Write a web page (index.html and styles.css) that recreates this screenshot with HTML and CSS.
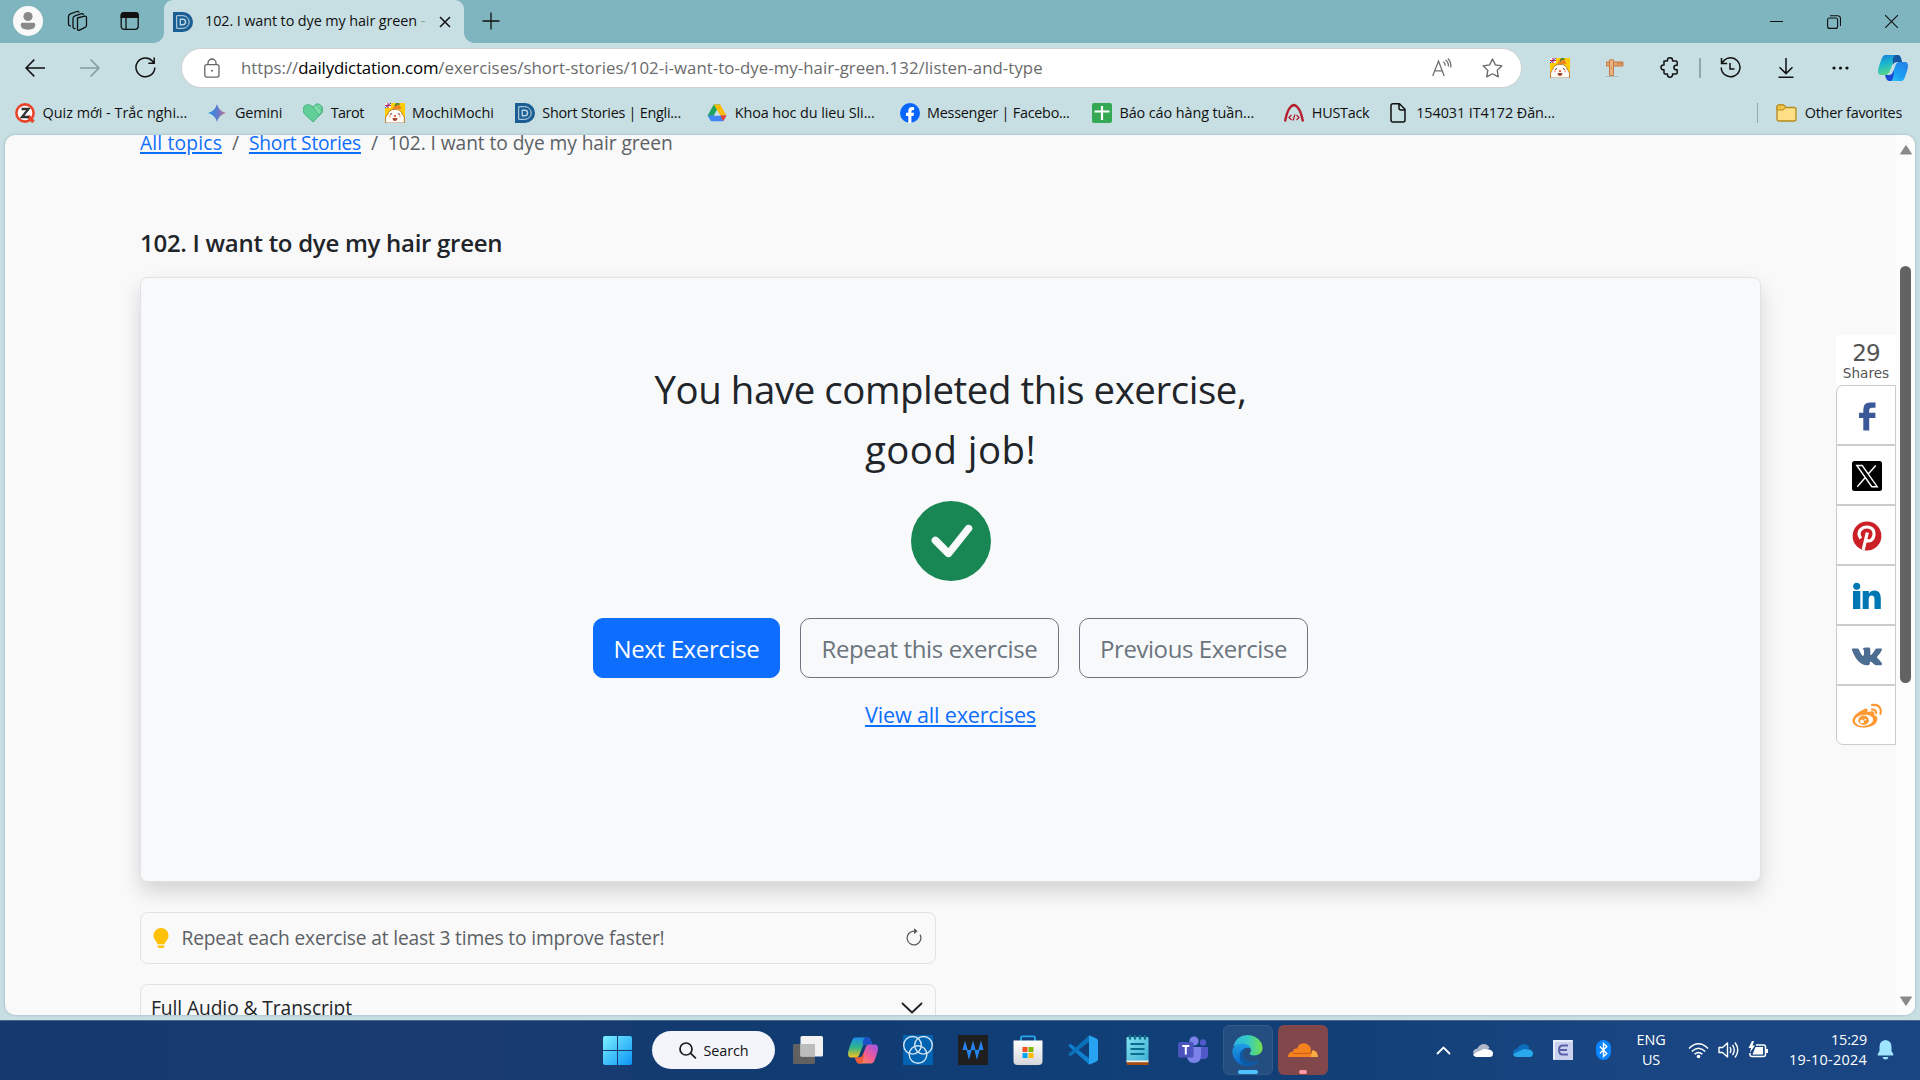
FILE: index.html
```html
<!DOCTYPE html>
<html lang="en">
<head>
<meta charset="utf-8">
<title>102. I want to dye my hair green</title>
<link rel="stylesheet" href="styles.css">
</head>
<body>
<svg class="defs" aria-hidden="true">
  <defs>
    <symbol id="daily" viewBox="0 0 20 20"><path d="M0 0h10a10 10 0 0 1 0 20H0z" fill="#1b5e94"/><path d="M3.7 3.7h6.2a6.3 6.3 0 0 1 0 12.6H3.7z" fill="none" stroke="#c8dde8" stroke-width="1"/><path d="M6.6 6.6h3.3a3.4 3.4 0 0 1 0 6.8H6.6z" fill="#b9d3e2"/><path d="M8 8h1.8a2 2 0 0 1 0 4H8z" fill="#1b5e94"/></symbol>
    <symbol id="mochi" viewBox="0 0 20 20"><path d="M0 0h20v20H0z" fill="#ffcb05"/><path d="M0 0h6v5H0z" fill="#f4eef8"/><path d="M0 2.5h6M3 0v5" stroke="#e0264a" stroke-width="1.2"/><path d="M0 5l6-5" stroke="#3048b0"/><path d="M.6 20V15q.2-2 2-3.200Q3.800 6.500 10 6.300t7.400 5.500q1.800 1.200 2 3.200v5z" fill="#fffdf8" stroke="#a8642a" stroke-width=".8"/><path d="M7.500 6Q9 1.500 13 2q3.500.5 3 4z" fill="#ee8722"/><path d="M10 3l2-2.500 2.500 1" stroke="#3d7a3a" stroke-width="1.500" fill="none"/><path d="M5 11.500l2-1M13 10.500l2 1" stroke="#5a3022"/><circle cx="5" cy="13.300" r="1.100" fill="#ffb3a6"/><circle cx="15" cy="13.300" r="1.100" fill="#ffb3a6"/><circle cx="10" cy="13" r="1.100" fill="#d8443a"/><path d="M7.500 15h5q-.3 3-2.500 3t-2.500-3z" fill="#a6442c"/></symbol>
    <linearGradient id="gem" x1="0" x2="1"><stop offset="0" stop-color="#2490e4"/><stop offset=".5" stop-color="#5b7ccf"/><stop offset="1" stop-color="#c9718e"/></linearGradient>
    <linearGradient id="cpa" x1="0" y1="0" x2=".3" y2="1"><stop offset="0" stop-color="#1c79d4"/><stop offset=".45" stop-color="#18b5d2"/><stop offset="1" stop-color="#55d88c"/></linearGradient>
    <linearGradient id="cpb" x1="1" y1="0" x2="0" y2="1"><stop offset="0" stop-color="#2a7ce8"/><stop offset=".5" stop-color="#199cf4"/><stop offset="1" stop-color="#31cdf5"/></linearGradient>
    <linearGradient id="cpc" x1="0" y1="0" x2="0" y2="1"><stop offset="0" stop-color="#1c8ee8"/><stop offset=".5" stop-color="#31b68a"/><stop offset="1" stop-color="#f5c51d"/></linearGradient>
    <linearGradient id="cpd" x1="1" y1="0" x2="0" y2="1"><stop offset="0" stop-color="#9a55ec"/><stop offset=".5" stop-color="#ee5b94"/><stop offset="1" stop-color="#ff9a3c"/></linearGradient>
    <linearGradient id="win" gradientUnits="userSpaceOnUse" x1="0" y1="0" x2="29" y2="29"><stop offset="0" stop-color="#7cf0ff"/><stop offset="1" stop-color="#0a94f5"/></linearGradient>
    <linearGradient id="edg" x1="0" y1="0" x2="1" y2="0"><stop offset="0" stop-color="#2fb4e6"/><stop offset=".5" stop-color="#33c9c4"/><stop offset="1" stop-color="#76e24a"/></linearGradient>
    <linearGradient id="edb" x1="0" y1="0" x2="0" y2="1"><stop offset="0" stop-color="#1fa0e8"/><stop offset="1" stop-color="#0b64c4"/></linearGradient>
    <linearGradient id="note" x1="0" y1="0" x2="1" y2="1"><stop offset="0" stop-color="#82e0ee"/><stop offset="1" stop-color="#3fb2d6"/></linearGradient>
    <linearGradient id="bag" x1="0" y1="0" x2="0" y2="1"><stop offset="0" stop-color="#fff"/><stop offset="1" stop-color="#d4d6da"/></linearGradient>
  </defs>
</svg>

<header class="titlebar">
  <div class="window-tools">
    <span class="cell"><svg width="30" height="30" viewBox="0 0 30 30"><circle cx="15" cy="15" r="15" fill="#f9f9f9"/><circle cx="15" cy="10.500" r="4.600" fill="#8a8a8a"/><path d="M9.500 16.800h11q1.800 0 1.800 1.800 0 5.200-7.300 5.200t-7.300-5.200q0-1.800 1.800-1.800z" fill="#8a8a8a"/></svg></span>
    <span class="cell"><svg width="22" height="22" viewBox="0 0 22 22" fill="none" stroke="#111" stroke-width="1.300" stroke-linejoin="round"><path d="M11.500 8l7-1.800q2-.4 2 1.600v7.400q0 1.600-1.500 2.100l-5.500 2.800q-2 .6-2-1.200V10q0-1.600 0-2z"/><path d="M9.500 18.500Q7 19 7 16.500V8.500Q7 6.500 9 5.800L15.500 3.700q1.800-.3 2 1.300"/><path d="M5 15.800Q2.500 16 2.500 14V6.500Q2.500 4.500 4.300 3.800L11 1.500q1.700-.4 2.200 1"/></svg></span>
    <span class="cell"><svg width="20" height="20" viewBox="0 0 20 20"><rect x="1.200" y="1.800" width="17" height="16.500" rx="3" fill="none" stroke="#111" stroke-width="1.300"/><path d="M.6 7V4Q.6 1 4 1h11.500q3.300 0 3.300 3v3z" fill="#111"/><path d="M6 7v11" stroke="#111" stroke-width="1.300"/></svg></span>
  </div>
  <div class="tab">
    <svg width="20" height="20"><use href="#daily"/></svg>
    <span class="tab-title">102. I want to dye my hair green<i> -</i></span>
    <svg width="12" height="12" viewBox="0 0 12 12" stroke="#111" stroke-width="1.500"><path d="M1 1l10 10M11 1L1 11"/></svg>
  </div>
  <svg class="new-tab" width="18" height="18" viewBox="0 0 18 18" stroke="#111" stroke-width="1.300"><path d="M9 .5v17M.5 9h17"/></svg>
  <div class="window-controls">
    <svg width="13" height="13" viewBox="0 0 13 13" stroke="#111"><path d="M0 6.500h13"/></svg>
    <svg width="14" height="14" viewBox="0 0 14 14" fill="none" stroke="#111" stroke-width="1.100"><rect x=".6" y="3" width="10" height="10.400" rx="2"/><path d="M3 .7h7.500q3 0 3 3V11"/></svg>
    <svg width="13" height="13" viewBox="0 0 13 13" stroke="#111" stroke-width="1.100"><path d="M0 0l13 13M13 0L0 13"/></svg>
  </div>
</header>

<nav class="toolbar">
  <div class="nav-buttons">
    <span class="cell"><svg width="20" height="18" viewBox="0 0 20 18" fill="none" stroke="#111" stroke-width="1.500"><path d="M20 9H1M9.300.6L1 9l8.300 8.400"/></svg></span>
    <span class="cell"><svg width="20" height="18" viewBox="0 0 20 18" fill="none" stroke="#879a9e" stroke-width="1.500"><path d="M0 9h19M10.700.6L19 9l-8.300 8.400"/></svg></span>
    <span class="cell"><svg width="21" height="21" viewBox="0 0 21 21" fill="none" stroke="#111" stroke-width="1.500"><path d="M19.800 10.500A9.400 9.400 0 1 1 17.300 4L19 6M19.200.5V6.300H13.300"/></svg></span>
  </div>
  <div class="address">
    <svg width="16" height="20" viewBox="0 0 16 20" fill="none" stroke="#666" stroke-width="1.300"><rect x=".8" y="6.600" width="14.200" height="12.500" rx="2"/><path d="M4 6.500V5a4 4 0 0 1 8 0v1.500"/><circle cx="8" cy="12.800" r="1" fill="#666" stroke="none"/></svg>
    <span class="url"><span class="scheme">https://</span><b>dailydictation.com</b><span class="path">/exercises/short-stories/102-i-want-to-dye-my-hair-green.132/listen-and-type</span></span>
    <span class="address-actions">
      <svg width="20" height="20" viewBox="0 0 20 20" fill="none" stroke="#707070" stroke-width="1.300"><path d="M.7 18L6.500 3l5.700 15M2.600 12.800h7.700M11.200 3.800q2 1.200 2 4M13.500 2q3 2 3 6.500M15.800.5q3.300 3 3.100 9"/></svg>
      <svg width="21" height="20" viewBox="0 0 21 20" fill="none" stroke="#666" stroke-width="1.300" stroke-linejoin="round"><path d="M10.500 1l2.900 5.900 6.500.9-4.700 4.600 1.100 6.500-5.800-3.100-5.800 3.100 1.100-6.500L1.100 7.800l6.500-.9z"/></svg>
    </span>
  </div>
  <div class="extensions">
    <span class="cell"><svg width="20" height="20"><use href="#mochi"/></svg></span>
    <span class="cell"><svg width="18" height="18" viewBox="0 0 18 18"><path d="M0 17.500h12" stroke="#aab9bc"/><path d="M.5 3H17v4H.5z" fill="#e3a56f" stroke="#c47b45"/><path d="M3.500.8h4v15.700h-4z" fill="#e9b27f" stroke="#c47b45"/><path d="M12 3.500v2M15 3.500v2M5 9h1" stroke="#a66030"/></svg></span>
    <span class="cell"><svg width="20" height="21" viewBox="0 0 20 21" fill="none" stroke="#111" stroke-width="1.500" stroke-linejoin="round"><path d="M4 4h3.400V3.400a2.600 2.600 0 0 1 5.200 0V4H16q1.200 0 1.200 1.200v3h-1a2.300 2.300 0 0 0 0 4.600h1v3q0 1.200-1.200 1.200h-3.400v.6a2.600 2.600 0 0 1-5.200 0V17H5.200Q4 17 4 15.800v-3h-.6a2.400 2.400 0 0 1 0-4.800H4z"/></svg></span>
    <span class="divider"></span>
    <span class="cell"><svg width="21" height="21" viewBox="0 0 21 21" fill="none" stroke="#111" stroke-width="1.500"><path d="M1.500 1v5.500h5.700M2 6.500a9.400 9.400 0 1 1-.8 4M10 6v6h4.500"/></svg></span>
    <span class="cell"><svg width="16" height="20" viewBox="0 0 16 20" fill="none" stroke="#111" stroke-width="1.500"><path d="M8 0v15.500M1.500 9.300L8 15.600l6.500-6.300M.5 19.200h15"/></svg></span>
    <span class="cell"><svg width="17" height="4" viewBox="0 0 17 4" fill="#111"><circle cx="2" cy="2" r="1.600"/><circle cx="8.500" cy="2" r="1.600"/><circle cx="15" cy="2" r="1.600"/></svg></span>
    <svg class="copilot" width="30" height="26" viewBox="0 0 30 26"><path d="M7 0h13q2 0 3 3l1 4h-5l-4 1-4 10q-1 2-3 2H3q-3 0-3-4 0-3 4-13 1-3 3-3z" fill="url(#cpa)"/><path d="M17 0h3q2 0 3 3l1 4h-5q-3 0-4 3-1-8 2-10z" fill="#1657a4"/><path d="M23 26H11q-2 0-3-3l-1-3h4q3 0 4-3l3-8q1-2 3-2h6q3 0 3 4 0 3-3.500 12-1 3-3.500 3z" fill="url(#cpb)"/><path d="M7 20h4q3 0 4-3l1-2q0 9-3 11h-2q-2 0-3-3z" fill="#1c49d2"/></svg>
  </div>
</nav>

<nav class="favorites">
  <a class="fav wide"><svg width="20" height="20" viewBox="0 0 20 20"><circle cx="10" cy="10" r="8.600" fill="#fff" stroke="#e8432b" stroke-width="2.600"/><path d="M13 13l5.500 6" stroke="#e8432b" stroke-width="3.500"/><path d="M6.500 6h7l-6.500 8h7" fill="none" stroke="#333" stroke-width="2.300"/></svg><span class="loose">Quiz mới - Trắc nghi...</span></a>
  <a class="fav"><svg width="20" height="20" viewBox="0 0 20 20"><path d="M10 1Q11.800 8.200 19 10 11.800 11.800 10 19 8.200 11.800 1 10 8.200 8.200 10 1z" fill="url(#gem)"/></svg><span>Gemini</span></a>
  <a class="fav"><svg width="20" height="20" viewBox="0 0 20 20"><path d="M1 3.500Q5-.5 10 4q4-5 8-1.500 4 4 0 8.500l-8 8L1.500 11q-3-3.500-.5-7.500z" fill="#62cf99" stroke="#3ba977" stroke-width=".8"/><path d="M10 4.200L13.300 1q3.500-.8 5.500 3 .8 3.500-1.300 6.500l-1.700 1.500z" fill="#7bdcaa" stroke="#3ba977" stroke-width=".7"/><path d="M13 1.500l5.500 6" stroke="#3ba977" stroke-width=".7"/></svg><span class="tight">Tarot</span></a>
  <a class="fav"><svg width="20" height="20"><use href="#mochi"/></svg><span class="loose">MochiMochi</span></a>
  <a class="fav wide"><svg width="20" height="20"><use href="#daily"/></svg><span class="snug">Short Stories | Engli...</span></a>
  <a class="fav wide"><svg width="20" height="18" viewBox="0 0 20 18"><path d="M6.800.5h6.400L10 6 4.200 16.800.6 11.500z" fill="#1ea362"/><path d="M6.800.5h6.400L19.500 11.500h-6.200z" fill="#fbbc05"/><path d="M.6 11.500h18.900l-3.400 5.800H4z" fill="#4285f4"/><path d="M13.300 11.500h6.200l-3.400 5.800z" fill="#ea4335"/><path d="M10 6.200l3.200 5.400H6.800z" fill="#c7dfe3"/></svg><span>Khoa hoc du lieu Sli...</span></a>
  <a class="fav wide"><svg width="20" height="20" viewBox="0 0 20 20"><circle cx="10" cy="10" r="10" fill="#0866ff"/><path d="M8.300 20v-7H6v-3.200h2.300V8.100q0-4 3.800-4 1 0 2 .2v2.800h-1.200q-1.500 0-1.500 1.500v1.200H14l-.5 3.200h-2.100v7z" fill="#fff"/></svg><span class="snug">Messenger | Facebo...</span></a>
  <a class="fav wide"><svg width="20" height="20" viewBox="0 0 20 20"><rect width="20" height="20" rx="2" fill="#34a853"/><path d="M10 3v14M2.500 8.500h15" stroke="#fff" stroke-width="2.200"/></svg><span>Báo cáo hàng tuần...</span></a>
  <a class="fav"><svg width="20" height="20" viewBox="0 0 20 20" fill="none" stroke="#b5202e"><path d="M1 18.500Q4 3 9.800 2 16 3 19 18.500" stroke-width="2.300"/><path d="M7.500 12L5 14.500 7.500 17M12.500 12l2.500 2.500-2.500 2.500M11 11.500l-2 6" stroke-width="1.300"/></svg><span class="snug">HUSTack</span></a>
  <a class="fav doc"><svg width="16" height="20" viewBox="0 0 16 20" fill="none" stroke="#111" stroke-width="1.500" stroke-linejoin="round"><path d="M3 .8h6.500l5.500 5.500V17q0 2-2 2H3q-2 0-2-2V2.800q0-2 2-2zM9 1v4q0 2 2 2h4"/></svg><span>154031 IT4172 Đăn...</span></a>
  <a class="fav other"><svg width="21" height="18" viewBox="0 0 21 18"><path d="M1 3q0-2 2-2h4.500l2.500 2.500H18q2 0 2 2V15q0 2-2 2H3q-2 0-2-2z" fill="#ffdf85" stroke="#b58a1d" stroke-width="1.300"/><path d="M1 6h6l3-2.500L7.500 1H3Q1 1 1 3z" fill="#f0c445" stroke="#b58a1d"/></svg><span class="snug">Other favorites</span></a>
</nav>

<div class="viewport">
  <main class="page">
    <div class="breadcrumb"><a class="all">All topics</a><i>/</i><a class="stories">Short Stories</a><i>/</i><span>102. I want to dye my hair green</span></div>
    <h1>102. I want to dye my hair green</h1>
    <section class="result">
      <p class="message">You have completed this exercise,<br><span>good job!</span></p>
      <svg class="check" width="80" height="80" viewBox="0 0 16 16"><path fill="#198754" d="M16 8A8 8 0 1 1 0 8a8 8 0 0 1 16 0m-3.970-3.030a.75.75 0 0 0-1.080.022L7.477 9.417 5.384 7.323a.75.75 0 0 0-1.060 1.060L6.970 11.030a.75.75 0 0 0 1.079-.02l3.992-4.990a.75.75 0 0 0-.010-1.050z"/></svg>
      <div class="actions"><button class="primary">Next Exercise</button><button class="repeat">Repeat this exercise</button><button class="previous">Previous Exercise</button></div>
      <a class="view-all">View all exercises</a>
    </section>
    <div class="tip">
      <svg width="20" height="20" viewBox="0 0 16 16" fill="#ffc107"><path d="M2 6a6 6 0 1 1 10.174 4.310c-.203.196-.359.400-.453.619l-.762 1.769A.5.5 0 0 1 10.500 13h-5a.5.5 0 0 1-.460-.302l-.761-1.770a2 2 0 0 0-.453-.618A5.980 5.980 0 0 1 2 6m3 8.500a.5.5 0 0 1 .5-.5h5a.5.5 0 0 1 0 1l-.224.447a1 1 0 0 1-.894.553H6.618a1 1 0 0 1-.894-.553L5.500 15a.5.5 0 0 1-.5-.5"/></svg>
      <span>Repeat each exercise at least 3 times to improve faster!</span>
      <svg class="reload" width="20" height="20" viewBox="0 0 16 16" fill="#565b60"><path fill-rule="evenodd" d="M8 3a5 5 0 1 0 4.546 2.914.5.5 0 0 1 .908-.417A6 6 0 1 1 8 2z"/><path d="M8 4.466V.534a.25.25 0 0 1 .410-.192l2.360 1.966c.120.100.120.284 0 .384L8.410 4.658A.25.25 0 0 1 8 4.466"/></svg>
    </div>
    <div class="transcript"><span>Full Audio &amp; Transcript</span><svg width="22" height="12" viewBox="0 0 22 12" fill="none" stroke="#212529" stroke-width="1.900" stroke-linecap="round" stroke-linejoin="round"><path d="M1.500 1.500L11 10.500l9.500-9"/></svg></div>
  </main>
  <aside class="share">
    <div class="count"><strong>29</strong><span>Shares</span></div>
    <a><svg width="30" height="30" viewBox="0 0 30 30"><path d="M11.300 29.500V17H7v-5.200h4.300V8.500Q11.300 1.500 18 1.500h5.500v5.300H20q-2.800 0-2.800 2.500v2.500h6.200V17h-6.200v12.500z" fill="#3b5998"/></svg></a>
    <a><svg width="30" height="30" viewBox="0 0 30 30"><rect width="30" height="30" rx="2.500" fill="#000"/><path d="M4.800 4.500h5.400L25.200 25.700h-5.400zM23.800 4.500L16 13.300M13.500 16.300L5.300 25.700" fill="none" stroke="#fff" stroke-width="1.400"/></svg></a>
    <a><svg width="30" height="30" viewBox="0 0 30 30"><circle cx="15" cy="15" r="14.400" fill="#cb2027"/><path d="M8.800 17.500Q5.500 12.500 8.500 8.800 11.800 5.200 17 6.200q5.500 1.500 5 7.300-.7 6-5.200 6.500-2.300 0-3.300-1.500M15.300 11.500L11.200 28.800" fill="none" stroke="#fff" stroke-width="3.200"/></svg></a>
    <a><svg width="30" height="30" viewBox="0 0 30 30" fill="#0077b5"><circle cx="4.700" cy="5.300" r="3.500"/><path d="M1 10h7.300v18H1zM10.700 10h6.100v2.500Q18.800 9.500 22.500 9.500q6.300 0 6.300 8V28h-6.300v-9.500q0-4-2.800-4-3 0-3 4V28h-6z"/></svg></a>
    <a><svg width="30" height="30" viewBox="0 0 30 30"><path d="M.5 7.500h5q1 0 1.400 1 2.600 6 4.300 6.500.8 0 .8-3V9.500q0-1-1.500-1.500 1-1.500 3-1.500H17q1.300 0 1.300 2v5q.3 1 1.200.2Q22 11 23.500 8q.3-.6 1.200-.6h4.500q1.200.2.600 1.500-1 2.800-4.500 6.600-.7 1 .2 1.700 4 3.800 4.500 5.300.3 1.500-1.500 1.700h-4.300q-1.200 0-2.200-1-2.500-2.800-3.500-2.800-.7.200-.7 2 0 1.800-1.800 1.800Q6 25.200 0 9q-.3-1.200.5-1.500z" fill="#4c6c91"/></svg></a>
    <a><svg width="30" height="30" viewBox="0 0 30 30"><g transform="translate(0 1)"><path d="M11.800 7.300q3.200-1.800 3.900 1 .1 1.200-.4 2 6-2.300 7 .2.400 1-.2 2.500 4 1.300 3.300 5-1.500 6.200-11.400 7.500-11.700.8-13.700-6Q0 13 11.800 7.300z" fill="#ff9933"/><ellipse cx="12" cy="18.300" rx="9.200" ry="5.600" fill="#fff" transform="rotate(-6 12 18)"/><ellipse cx="11.600" cy="18.300" rx="5.300" ry="4.700" fill="#ff9933"/><circle cx="10" cy="19.500" r="1.900" fill="#fff"/><circle cx="13.300" cy="17.700" r=".9" fill="#fff"/><path d="M20 3q7-1 8.600 4.500.5 2-.2 4.500M20 7.500q4-.5 4.200 3.800" fill="none" stroke="#ff9933" stroke-width="2.100" stroke-linecap="round"/></g></svg></a>
  </aside>
  <div class="scrollbar">
    <svg width="12" height="10" viewBox="0 0 12 10"><path d="M6 .5L11.500 9H.5z" fill="#8a8a8a" stroke="#8a8a8a" stroke-linejoin="round"/></svg>
    <span class="thumb"></span>
    <svg class="down" width="12" height="10" viewBox="0 0 12 10"><path d="M6 9.500L11.500 1H.5z" fill="#8a8a8a" stroke="#8a8a8a" stroke-linejoin="round"/></svg>
  </div>
</div>

<footer class="taskbar">
  <div class="apps">
    <span class="app"><svg width="29" height="29" viewBox="0 0 29 29"><path d="M2 0h12v14H0V2q0-2 2-2zM15 0h12q2 0 2 2v12H15zM0 15h14v14H2q-2 0-2-2zM15 15h14v12q0 2-2 2H15z" fill="url(#win)"/></svg></span>
    <span class="search"><svg width="18" height="17" viewBox="0 0 18 17" fill="none" stroke="#1b1b1b" stroke-width="1.700"><circle cx="7" cy="7" r="6"/><path d="M11.400 11.200l5.500 5.200"/></svg>Search</span>
    <span class="app"><svg width="30" height="28" viewBox="0 0 30 28"><rect x="0" y="8" width="22" height="20" rx="1.500" fill="#616161"/><rect x="7.500" y="0" width="22.500" height="20.500" rx="1.500" fill="#f2f2f2"/><rect x="7.500" y="8" width="14.500" height="12.500" fill="#bcbcbc"/></svg></span>
    <span class="app"><svg width="30" height="27" viewBox="0 0 30 26"><path d="M7 0h13q2 0 3 3l1 4h-5l-4 1-4 10q-1 2-3 2H3q-3 0-3-4 0-3 4-13 1-3 3-3z" fill="url(#cpc)"/><path d="M17 0h3q2 0 3 3l1 4h-5q-3 0-4 3-1-8 2-10z" fill="#1b50c8"/><path d="M23 26H11q-2 0-3-3l-1-3h4q3 0 4-3l3-8q1-2 3-2h6q3 0 3 4 0 3-3.500 12-1 3-3.500 3z" fill="url(#cpd)"/><path d="M7 20h4q3 0 4-3l1-2q0 9-3 11h-2q-2 0-3-3z" fill="#ee5a3c"/></svg></span>
    <span class="app"><svg width="30" height="30" viewBox="0 0 30 30"><path d="M0 0h30v30H0z" fill="#0063b1"/><g fill="none" stroke="#d4e4f2" stroke-width="1.400"><circle cx="9.500" cy="10.300" r="8.800"/><circle cx="20.500" cy="10.300" r="8.800"/><circle cx="15" cy="19.500" r="8.800"/></g></svg></span>
    <span class="app"><svg width="30" height="30" viewBox="0 0 30 30"><path d="M0 0h30v30H0z" fill="#1f1f1f"/><path d="M4.500 15h5.200L7 5.500zM12.400 15h5.200L15 5.500zM20.300 15h5.200L23 5.500zM8.500 15h5.200L11 25zM16.400 15h5.200L19 25z" fill="#2585ef"/></svg></span>
    <span class="app"><svg width="30" height="30" viewBox="0 0 30 30"><path d="M8 8V2.500Q8 1.300 9.200 1.300h11.600q1.200 0 1.200 1.200V8" fill="none" stroke="#28a8ea" stroke-width="1.800"/><path d="M.5 5.500h29V26q0 4-4 4h-21q-4 0-4-4z" fill="url(#bag)"/><path d="M9.500 12h5v5h-5z" fill="#f25022"/><path d="M15.500 12h5v5h-5z" fill="#7fba00"/><path d="M9.500 18h5v5h-5z" fill="#00a4ef"/><path d="M15.500 18h5v5h-5z" fill="#ffb900"/></svg></span>
    <span class="app"><svg width="30" height="30" viewBox="0 0 30 30"><path d="M1.500 9.500q1-.8 2 0L22 24l-1 5.500L.5 11q-1-1 1-1.500z" fill="#0f7fcf"/><path d="M1.500 20.500q1 .8 2 0L22 6l-1-5.500L.5 19q-1 1 1 1.500z" fill="#0a72bb"/><path d="M21 .3L28.500 3.500q1.500.8 1.500 2v19q0 1.200-1.500 2L21 29.700z" fill="#27a3f2"/></svg></span>
    <span class="app"><svg width="23" height="30" viewBox="0 0 23 30"><path d="M.5 27h22v3H2Q.5 30 .5 28.500z" fill="#a54e12"/><path d="M.5 25h22v2.200H.5z" fill="#eee"/><path d="M.5 3Q.5 2 1.500 2h20q1 0 1 1v22.500H.5z" fill="url(#note)"/><path d="M4.500 9h14M4.500 14h14M4.500 19h14" stroke="#0b6c8d" stroke-width="2"/><path d="M4 .5v3M9 .5v3M14 .5v3M19 .5v3" stroke="#126e8c" stroke-width="2.400" stroke-linecap="round"/></svg></span>
    <span class="app"><svg width="30" height="28" viewBox="0 0 30 28"><circle cx="25" cy="6.500" r="3.200" fill="#5059c9"/><path d="M21 11h9v8q0 4-4 4h-5z" fill="#5059c9"/><circle cx="16" cy="5" r="4.600" fill="#7b83eb"/><path d="M9 11h14v8q0 8-7 8t-7-8z" fill="#7b83eb"/><rect x="0" y="6" width="15.500" height="15.500" rx="1.500" fill="#4b53bc"/><path d="M4.300 10h7M7.800 10v8.500" stroke="#fff" stroke-width="2"/></svg></span>
    <span class="app active"><svg width="31" height="31" viewBox="0 0 31 31"><path d="M1 11.500Q4.500 0 15.500 0q9 0 13.700 7.500Q33 16 26.500 19.500q-5 2-8.500 0-.8-1 .3-2Q20 15 17.500 12 13 7.500 6 9.500q-3.500 1-5 2z" fill="url(#edg)"/><path d="M.2 16Q1.500 8.500 10 8.500q6.500 0 9 5-5.500-2.500-8 2.500-2 5.500 3 9.500 6 4 13.500-.8Q23 31 15.500 31 1 30 .2 16z" fill="url(#edb)"/><path d="M11 16q-2 5.500 3 9.500 6 4 13.500-.8-6 6.800-13.500 5.600Q6 27 8 18.500 9.500 14 14 12.800q-2.300 1.200-3 3.200z" fill="#0c59a4"/></svg><i></i></span>
    <span class="app alert"><svg width="30" height="14" viewBox="0 0 30 14"><path d="M0 14q0-5 5-5.500.5-3.500 4-3Q11 0 16.500.3 22 1.500 22.800 6L24 14z" fill="#f6821f"/><path d="M22.500 14l2-7q5 .5 5.500 7z" fill="#fbad41"/><path d="M5 10.500h15.500q2 0 2.500-2" fill="none" stroke="#c85e16"/></svg><i></i></span>
  </div>
  <div class="tray">
    <span class="slot"><svg width="15" height="9" viewBox="0 0 15 9" fill="none" stroke="#fff" stroke-width="1.800" stroke-linecap="round"><path d="M1.500 7.500l6-6 6 6"/></svg></span>
    <span class="slot"><svg width="20" height="13" viewBox="0 0 20 13"><path d="M0 9q0-4 4.500-4.500Q6.500 0 11 0q4 .3 5.500 4L9 9z" fill="#aeb8ca"/><path d="M3 13q-2.500-.5-3-3l11-5 5.500.5Q20 6.500 20 9.500q0 3.500-3.500 3.500z" fill="#fff"/></svg></span>
    <span class="slot"><svg width="20" height="13" viewBox="0 0 20 13"><path d="M0 9q0-4 4.500-4.500Q6.500 0 11 0q4 .3 5.500 4L9 9z" fill="#0f6cbd"/><path d="M3 13q-2.500-.5-3-3l11-5 5.500.5Q20 6.500 20 9.500q0 3.500-3.500 3.500z" fill="#28a8ea"/></svg></span>
    <span class="slot"><svg width="20" height="20" viewBox="0 0 20 20"><path d="M0 0h20v20H0z" fill="#c9d1ee"/><path d="M1 19V1h18" fill="none" stroke="#e9edfb" stroke-width="2"/><path d="M15 5.500H9.500q-3.500 0-3.500 4.500t3.500 4.500H15M6 10h8" fill="none" stroke="#5b60a8" stroke-width="2"/></svg></span>
    <span class="slot"><svg width="15" height="20" viewBox="0 0 15 20"><rect width="15" height="20" rx="7.500" fill="#0a84ff"/><path d="M3.800 6.500l7 7-3.300 3V3.500l3.300 3-7 7" fill="none" stroke="#fff" stroke-width="1.400"/></svg></span>
    <span class="language"><span>ENG</span><span>US</span></span>
    <span class="status">
      <svg width="21" height="17" viewBox="0 0 21 17" fill="none" stroke="#fff" stroke-width="1.500"><path d="M1 6.500q9.500-9.500 19 0M3.800 9.500q6.700-6.500 13.400 0M6.600 12.200q3.900-3.500 7.800 0"/><circle cx="10.500" cy="14.500" r="1.800" fill="#fff" stroke="none"/></svg>
      <svg width="21" height="18" viewBox="0 0 21 18" fill="none" stroke="#fff" stroke-width="1.400"><path d="M1 6.500h3.500L9.500 2v14l-5-4.500H1z" stroke-linejoin="round"/><path d="M12 6q1.800 3 0 6M14.500 3.800q3.500 5.200 0 10.400M17 1.500q5.500 7.500 0 15"/></svg>
      <svg width="21" height="18" viewBox="0 0 21 18" fill="none" stroke="#fff" stroke-width="1.500"><path d="M8 4h7.500q2 0 2 2v7.500q0 2-2 2H4q-2 0-2-2V12"/><path d="M7.500 6H15v7.500H4.500z" fill="#fff" stroke="none"/><path d="M19 8v4" stroke-width="2"/><path d="M4 0L.5 7H3L2 11.500 7 4.500H4.500L6 0z" fill="#fff" stroke="none"/></svg>
    </span>
    <span class="clock"><span>15:29</span><span class="date">19-10-2024</span></span>
    <svg class="bell" width="17" height="20" viewBox="0 0 17 20" fill="#9fe5ff"><path d="M8.500 0Q14.500.5 14.500 7v4l2 3.500q0 1-1 1h-14q-1 0-1-1l2-3.500V7Q2.500.5 8.500 0zM5.500 17h6q-.5 2.500-3 2.500t-3-2.500z"/></svg>
  </div>
</footer>
</body>
</html>
```
FILE: styles.css
```css
* { box-sizing: border-box; }
html, body { height: 100%; }
body {
  margin: 0;
  overflow: hidden;
  display: flex;
  flex-direction: column;
  background: #c7dfe3;
  color: #111;
  font-family: "Open Sans", "Noto Sans", sans-serif;
  font-size: 14.4px;
}
svg { flex: none; display: block; }
i { font-style: normal; }
.defs { position: absolute; width: 0; height: 0; }
.cell { flex: none; width: 55px; display: flex; align-items: center; justify-content: center; }

/* Tab strip */
.titlebar { flex: none; height: 43px; display: flex; background: #7eb5bf; }
.window-tools { display: flex; width: 164px; padding-bottom: 1px; }
.window-tools .cell:nth-child(2) { width: 44px; }
.window-tools .cell:nth-child(3) { width: 61px; }
.tab {
  position: relative;
  width: 300px;
  padding: 0 13px 0 9px;
  display: flex;
  align-items: center;
  background: #c7dfe3;
  border-radius: 9px 9px 0 0;
}
.tab::before, .tab::after { content: ""; position: absolute; bottom: 0; width: 10px; height: 10px; }
.tab::before { left: -10px; background: radial-gradient(circle at 0 0, #7eb5bf 9.5px, #c7dfe3 10px); }
.tab::after { right: -10px; background: radial-gradient(circle at 100% 0, #7eb5bf 9.5px, #c7dfe3 10px); }
.tab-title { flex: 1; margin-left: 12px; padding-bottom: 1px; line-height: 20px; letter-spacing: -.1px; white-space: pre; }
.tab-title i { color: #8ba0a4; }
.new-tab { margin: 12px 0 0 18px; }
.window-controls { margin-left: auto; padding-right: 22px; display: flex; align-items: center; gap: 44px; }

/* Address row */
.toolbar { flex: none; height: 49px; display: flex; align-items: center; }
.nav-buttons { display: flex; width: 181px; padding-left: 7.5px; }
.address {
  width: 1341px;
  height: 40px;
  padding: 0 18px 0 22px;
  display: flex;
  align-items: center;
  background: #fff;
  border: 1px solid #cdd0d1;
  border-radius: 20px;
}
.url { margin-left: 21px; font-size: 16.8px; line-height: 24px; color: #6b6b6b; white-space: nowrap; }
.url b { font-weight: 400; color: #000; letter-spacing: -.167px; }
.path { letter-spacing: .065px; }
.address-actions { margin-left: auto; display: flex; gap: 30px; }
.extensions { display: flex; align-items: center; margin-left: 10px; }
.divider { width: 2px; height: 20px; margin: 0 2px; background: #93a7ab; }
.copilot { margin-left: 10px; }

/* Favorites row */
.favorites { flex: none; height: 43px; padding: 0 18px 2px 15px; display: flex; align-items: center; gap: 20.8px; line-height: 20px; }
.fav { display: flex; align-items: center; gap: 7.5px; white-space: nowrap; letter-spacing: -.08px; }
.fav.wide { width: 171.600px; }
.fav.doc { gap: 10px; }
.fav .tight { letter-spacing: -.5px; }
.fav .snug { letter-spacing: -.26px; }
.fav .loose { letter-spacing: 0; }
.fav.other { margin-left: auto; padding-left: 18px; height: 20px; border-left: 1px solid #93a7ab; }

/* Web content */
.viewport {
  flex: none;
  height: 880px;
  margin: 0 5px;
  display: flex;
  align-items: flex-start;
  overflow: hidden;
  background: #f9f9f9;
  border-radius: 10px;
  box-shadow: 0 0 3px rgba(60, 100, 108, .35);
}
.page { width: 1621px; margin: -7px 0 0 135px; color: #212529; }
.breadcrumb { height: 30px; display: flex; gap: 10px; font-size: 19.200px; line-height: 30px; letter-spacing: -.07px; color: #5c6166; white-space: nowrap; }
.breadcrumb a, .view-all { color: #0d6efd; text-decoration: underline; text-decoration-thickness: 1.5px; text-underline-offset: 2px; }
.breadcrumb .all { letter-spacing: .19px; }
.breadcrumb .stories { letter-spacing: -.23px; }
h1 { margin: 70px 0 19px; font-size: 24px; line-height: 30px; font-weight: 600; letter-spacing: -.28px; }
.result {
  height: 605px;
  padding-top: 81px;
  display: flex;
  flex-direction: column;
  align-items: center;
  background: #f8f9fb;
  border: 1px solid #dee2e6;
  border-radius: 7.500px;
  box-shadow: 0 10px 20px rgba(0, 0, 0, .15);
}
.message { margin: 0; font-size: 38.400px; line-height: 60px; letter-spacing: -.427px; text-align: center; }
.message span { letter-spacing: .455px; }
.check { margin-top: 22px; }
.actions { display: flex; gap: 20px; margin-top: 37px; }
.actions button {
  height: 60px;
  padding: 1px 0 0;
  font: 24px/36px "Open Sans", "Noto Sans", sans-serif;
  color: #6c757d;
  background: none;
  border: 1px solid #6c757d;
  border-radius: 10px;
}
.actions .primary { width: 187px; letter-spacing: -.35px; color: #fff; background: #0d6efd; border-color: #0d6efd; }
.actions .repeat { width: 259px; letter-spacing: -.37px; }
.actions .previous { width: 229px; letter-spacing: -.426px; }
.view-all { margin-top: 20px; font-size: 21.600px; line-height: 34px; letter-spacing: -.18px; }
.tip, .transcript {
  width: 796px;
  height: 52px;
  padding: 0 11px 0 10px;
  display: flex;
  align-items: center;
  font-size: 19.200px;
  line-height: 30px;
  border: 1px solid #dee2e6;
  border-radius: 7.500px;
}
.tip { margin: 30px 0 20px; color: #5c6166; letter-spacing: -.172px; }
.tip span { margin-left: 10.5px; }
.reload { margin-left: auto; }
.transcript { height: 60px; padding: 0 12px 12px 10px; justify-content: space-between; letter-spacing: -.076px; }

/* Share buttons */
.share { width: 60px; margin: 200px 0 0 auto; display: flex; flex-direction: column; }
.count { height: 50px; padding-top: 6px; display: flex; flex-direction: column; align-items: center; background: #fff; color: #555; font: 13.600px/15px "DejaVu Sans", sans-serif; }
.count strong { font-size: 23px; line-height: 25px; font-weight: 400; letter-spacing: -1px; }
.share a { height: 60px; padding: 1px 0 0 1px; display: flex; align-items: center; justify-content: center; background: #fff; border: 1px solid #ccc; }
.count + a { border-radius: 7px 0 0 0; }
.share a:last-child { border-radius: 0 0 0 7px; }

.scrollbar { width: 19px; height: 880px; padding: 10px 0 9px 4px; display: flex; flex-direction: column; background: #fcfcfc; }
.thumb { width: 11px; height: 417px; margin-top: 111px; border-radius: 6px; background: #636363; }
.down { margin-top: auto; }

/* Taskbar */
.taskbar {
  height: 60px;
  margin-top: 5px;
  padding: 0 26px 0 590px;
  display: flex;
  justify-content: space-between;
  box-shadow: inset 0 1px #47678b;
  background: linear-gradient(90deg, #153a70 0%, #193b72 25%, #123b70 38%, #103e77 55%, #123f76 70%, #194682 85%, #194682 100%);
}
.apps, .tray { display: flex; align-items: center; }
.app { position: relative; width: 55px; height: 50px; display: flex; align-items: center; justify-content: center; }
.app.active, .app.alert { width: 50px; margin: 0 2.500px; border-radius: 6px; }
.app.active { background: #244d80; border: 1px solid #315887; }
.app.alert { background: #82474b; }
.app i { position: absolute; bottom: 1px; left: 50%; height: 4px; border-radius: 2px; transform: translateX(-50%); }
.active i { width: 20px; background: #4cc2ff; bottom: 0; }
.alert i { width: 8px; background: #ff99a4; }
.search {
  width: 123px;
  height: 38px;
  margin: 0 5px 0 7px;
  display: flex;
  align-items: center;
  justify-content: center;
  gap: 7px;
  border-radius: 19px;
  background: #f3f5fa;
  letter-spacing: -.095px;
}
.tray { color: #fff; line-height: 20px; }
.slot { width: 40px; display: flex; justify-content: center; }
.language { width: 56px; display: flex; flex-direction: column; align-items: center; letter-spacing: -.1px; }
.status { display: flex; gap: 9px; margin-left: 9px; align-items: center; }
.clock { width: 98px; display: flex; flex-direction: column; align-items: flex-end; letter-spacing: -.139px; }
.date { letter-spacing: .291px; }
.bell { margin-left: 10px; }
```
